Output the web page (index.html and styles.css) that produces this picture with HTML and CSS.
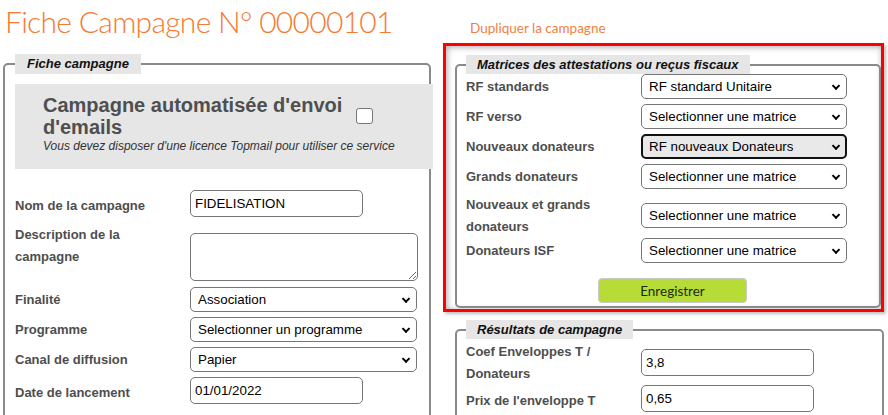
FILE: index.html
```html
<!DOCTYPE html>
<html lang="fr">
<head>
<meta charset="utf-8">
<title>Fiche Campagne</title>
<link rel="stylesheet" href="styles.css">
</head>
<body>
<div class="page">
  <div class="col-left">
    <h1 class="title">Fiche Campagne N° 00000101</h1>
    <fieldset class="box box-left">
      <legend>Fiche campagne</legend>
      <div class="auto">
        <div class="auto-head">
          <div class="auto-title">Campagne automatisée d'envoi d'emails</div>
          <input type="checkbox" class="check">
        </div>
        <div class="auto-note">Vous devez disposer d'une licence Topmail pour utiliser ce service</div>
      </div>
      <div class="rows rows-left">
        <div class="row">
          <label class="lbl lbl-low">Nom de la campagne</label>
          <input class="inp" type="text" value="FIDELISATION">
        </div>
        <div class="row row-desc">
          <label class="lbl">Description de la campagne</label>
          <textarea class="txt"></textarea>
        </div>
        <div class="row">
          <label class="lbl">Finalité</label>
          <span class="sel sel-wide"><select><option>Association</option></select></span>
        </div>
        <div class="row">
          <label class="lbl">Programme</label>
          <span class="sel sel-wide"><select><option>Selectionner un programme</option></select></span>
        </div>
        <div class="row">
          <label class="lbl">Canal de diffusion</label>
          <span class="sel sel-wide"><select><option>Papier</option></select></span>
        </div>
        <div class="row">
          <label class="lbl lbl-low">Date de lancement</label>
          <input class="inp" type="text" value="01/01/2022">
        </div>
      </div>
    </fieldset>
  </div>
  <div class="col-right">
    <div class="dup-wrap"><a class="dup">Dupliquer la campagne</a></div>
    <div class="highlight">
      <fieldset class="box box-right">
        <legend>Matrices des attestations ou reçus fiscaux</legend>
        <div class="rows">
          <div class="row">
            <label class="lbl">RF standards</label>
            <span class="sel"><select><option>RF standard Unitaire</option></select></span>
          </div>
          <div class="row">
            <label class="lbl">RF verso</label>
            <span class="sel"><select><option>Selectionner une matrice</option></select></span>
          </div>
          <div class="row">
            <label class="lbl">Nouveaux donateurs</label>
            <span class="sel sel-focus"><select><option>RF nouveaux Donateurs</option></select></span>
          </div>
          <div class="row">
            <label class="lbl">Grands donateurs</label>
            <span class="sel"><select><option>Selectionner une matrice</option></select></span>
          </div>
          <div class="row row-ng">
            <label class="lbl">Nouveaux et grands donateurs</label>
            <span class="sel"><select><option>Selectionner une matrice</option></select></span>
          </div>
          <div class="row">
            <label class="lbl">Donateurs ISF</label>
            <span class="sel"><select><option>Selectionner une matrice</option></select></span>
          </div>
        </div>
        <div class="actions"><button class="btn" type="button">Enregistrer</button></div>
      </fieldset>
    </div>
    <fieldset class="box box-results">
      <legend>Résultats de campagne</legend>
      <div class="rows rows-tight">
        <div class="row">
          <label class="lbl lbl-two">Coef Enveloppes T / Donateurs</label>
          <input class="inp" type="text" value="3,8">
        </div>
        <div class="row">
          <label class="lbl lbl-low">Prix de l'enveloppe T</label>
          <input class="inp" type="text" value="0,65">
        </div>
      </div>
    </fieldset>
  </div>
</div>
</body>
</html>
```

FILE: styles.css
```css
html, body {
  margin: 0;
  padding: 0;
  background: #fff;
  overflow: hidden;
}

body {
  font-family: "Liberation Sans", Arial, sans-serif;
}

.page {
  display: grid;
  grid-template-columns: 428px 441px;
  column-gap: 12px;
  padding-left: 3px;
}

.title {
  margin: 0 0 12px 2px;
  font-family: Lato, "Open Sans", sans-serif;
  font-weight: 300;
  font-size: 30px;
  letter-spacing: -0.7px;
  line-height: 42px;
  color: #f57a32;
  white-space: nowrap;
}

.dup-wrap {
  padding: 18px 0 5px 27px;
  line-height: 20px;
}

.dup {
  font-family: Lato, "Open Sans", sans-serif;
  font-size: 13.5px;
  color: #f2803f;
}

.box {
  margin: 0;
  border: 2px solid #8a8a8a;
  border-radius: 5px;
  min-width: 0;
}

.box legend {
  background: #e6e6e6;
  font-family: "Liberation Sans", Arial, sans-serif;
  font-weight: bold;
  font-style: italic;
  font-size: 13px;
  line-height: 19px;
  color: #111;
  padding: 0 11px;
}

.box-left {
  width: 428px;
  box-sizing: border-box;
  padding: 0 0 30px 10px;
}

.box-left legend {
  padding: 0 12px;
  line-height: 20px;
}

.auto {
  margin-top: 10px;
  width: 418px;
  box-sizing: border-box;
  background: #e6e6e6;
  padding: 10px 0 15px 28px;
}

.auto-head {
  display: flex;
  align-items: center;
  column-gap: 13px;
}

.auto-title {
  width: 300px;
  font-weight: bold;
  font-size: 20px;
  line-height: 22px;
  color: #4f4f4f;
}

.check {
  appearance: none;
  -webkit-appearance: none;
  margin: 0;
  width: 17px;
  height: 16px;
  border: 1px solid #767676;
  border-radius: 3px;
  background: #fff;
}

.auto-note {
  margin-top: 1px;
  font-style: italic;
  font-size: 12px;
  line-height: 15px;
  color: #333;
}

.rows {
  display: flex;
  flex-direction: column;
  row-gap: 5px;
}

.rows-left {
  margin-top: 21px;
}

.rows-tight {
  row-gap: 0;
}

.row {
  display: flex;
  align-items: center;
}

.lbl {
  flex: none;
  width: 175px;
  font-weight: bold;
  font-size: 13px;
  line-height: 22px;
  color: #4e4e4e;
}

.lbl-low {
  padding-top: 4px;
}

.row-desc {
  align-items: flex-start;
  margin-bottom: 1px;
}

.row-desc .lbl {
  padding-top: 2px;
  width: 150px;
  margin-right: 25px;
}

.row-ng {
  align-items: flex-start;
}

.row-ng .lbl {
  width: 150px;
  margin-right: 25px;
  margin-bottom: -5px;
}

.row-ng .sel {
  margin-top: 9px;
}

.lbl-two {
  width: 150px;
  margin-right: 25px;
  padding-top: 2px;
}

.inp {
  box-sizing: border-box;
  width: 173px;
  height: 27px;
  margin: 0;
  padding: 0 4px;
  border: 1px solid #767676;
  border-radius: 5px;
  font-family: "Liberation Sans", Arial, sans-serif;
  font-size: 13.333px;
  color: #000;
  background: #fff;
}

.txt {
  box-sizing: border-box;
  width: 228px;
  height: 48px;
  margin: 11px 0 0 0;
  padding: 2px 4px;
  border: 1px solid #767676;
  border-radius: 5px;
  font-family: "Liberation Sans", Arial, sans-serif;
  font-size: 13.333px;
  background: #fff;
}

.sel {
  position: relative;
  display: inline-block;
  width: 206px;
  height: 25px;
}

.sel-wide {
  width: 227px;
}

.sel select {
  appearance: none;
  -webkit-appearance: none;
  box-sizing: border-box;
  width: 100%;
  height: 100%;
  margin: 0;
  padding: 0 20px 0 7px;
  border: 1px solid #767676;
  border-radius: 5px;
  background: #fff;
  font-family: "Liberation Sans", Arial, sans-serif;
  font-size: 13.333px;
  color: #000;
}

.sel::after {
  content: "";
  position: absolute;
  right: 8px;
  top: 50%;
  width: 4px;
  height: 4px;
  border-right: 2px solid #000;
  border-bottom: 2px solid #000;
  transform: translateY(-70%) rotate(45deg);
  pointer-events: none;
}

.sel-focus select {
  border: 2px solid #111;
  padding-left: 6px;
  background: #e9e9e9;
}

.highlight {
  border: 3px solid #ff0000;
  padding: 9px 0 1px 9px;
  box-shadow: inset 1px 1px 6px rgba(0, 0, 0, 0.35), 2px 2px 3px rgba(0, 0, 0, 0.25);
}

.box-right {
  padding: 0 0 3px 9px;
}

.actions {
  display: flex;
  justify-content: center;
  margin-top: 15px;
}

.btn {
  box-sizing: border-box;
  width: 149px;
  height: 25px;
  margin: 0;
  padding: 0;
  border: 1px solid #c9c9c9;
  border-radius: 4px;
  background: #b7dc37;
  font-family: Lato, "Open Sans", sans-serif;
  font-size: 13.5px;
  color: #1b2b0a;
}

.box-results {
  margin: 8px 0 0 12px;
  padding: 0 0 30px 9px;
}
```
